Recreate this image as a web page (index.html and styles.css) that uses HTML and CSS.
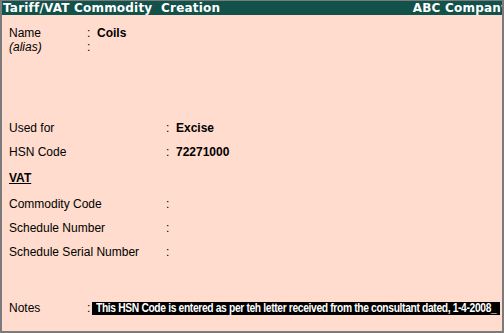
FILE: index.html
```html
<!DOCTYPE html>
<html lang="en">
<head>
    <meta charset="UTF-8">
    <title>Tariff/VAT Commodity Creation</title>
    <link rel="stylesheet" href="styles.css">
</head>
<body>

    <div class="screen">
        <div class="title-bar">
            <span class="title">Tariff/VAT Commodity&nbsp; Creation</span>
            <span class="company">ABC Company</span>
        </div>

        <div class="form">
            <!-- name block -->
            <div class="short-row">
                <span class="label narrow">Name</span>
                <span class="colon">:</span>
                <span class="value">Coils</span>
            </div>
            <div class="short-row">
                <span class="label narrow alias">(alias)</span>
                <span class="colon">:</span>
            </div>

            <!-- excise block -->
            <div class="section">
                <div class="row">
                    <span class="label">Used for</span>
                    <span class="colon">:</span>
                    <span class="value">Excise</span>
                </div>
                <div class="row">
                    <span class="label">HSN Code</span>
                    <span class="colon">:</span>
                    <span class="value">72271000</span>
                </div>
                <div class="row heading">VAT</div>
                <div class="row vat-first">
                    <span class="label">Commodity Code</span>
                    <span class="colon">:</span>
                </div>
                <div class="row">
                    <span class="label">Schedule Number</span>
                    <span class="colon">:</span>
                </div>
                <div class="row">
                    <span class="label">Schedule Serial Number</span>
                    <span class="colon">:</span>
                </div>
            </div>

            <div class="row notes">
                <span class="label narrow">Notes</span>
                <span class="colon">:</span>
                <div class="notes-box">
                    <span class="notes-text">This HSN Code is entered as per teh letter received from the consultant dated, 1-4-2008_</span>
                </div>
            </div>
        </div>
    </div>

</body>
</html>
```

FILE: styles.css
```css
body {
    margin: 0;
    background-color: #ffdccd;
}
.screen {
    box-sizing: border-box;
    width: 504px;
    height: 333px;
    border-top: 1px solid #7b7b7b;
    border-left: 2px solid #7b7b7b;
    border-right: 2px solid #7b7b7b;
    border-bottom: 2px solid #7b7b7b;
    background-color: #ffdccd;
    overflow: hidden;
    font-family: "Liberation Sans", Arial, sans-serif;
    font-size: 12px;
    color: #000;
}
.title-bar {
    display: flex;
    justify-content: space-between;
    height: 14px;
    padding-left: 1px;
    background-color: #12524a;
    color: #fff;
    font-family: "DejaVu Sans", Verdana, sans-serif;
    font-weight: bold;
    font-size: 12px;
    letter-spacing: 0.2px;
    line-height: 15px;
    white-space: nowrap;
    overflow: hidden;
}
.company {
    margin-right: -7px; /* last letter is cut by the window edge */
}
.form {
    padding: 11px 0 0 7px;
}
.short-row {
    display: flex;
    height: 14px;
    line-height: 14px;
}
.row {
    display: flex;
    height: 24px;
    line-height: 24px;
}
.label {
    width: 157px;
    flex-shrink: 0;
}
.label.narrow {
    width: 78px;
}
.alias {
    font-style: italic;
}
.colon {
    width: 10px;
    flex-shrink: 0;
}
.value {
    font-weight: bold;
}
.section {
    margin-top: 62px;
}
.heading {
    box-sizing: border-box;
    padding-top: 2px;
    font-weight: bold;
    text-decoration: underline;
}
.vat-first {
    margin-top: 4px;
}
.notes {
    margin-top: 32px;
    align-items: center;
}
.notes-box {
    box-sizing: border-box;
    display: flex;
    align-items: center;
    width: 408px;
    height: 13px;
    margin-left: -5px;
    padding-left: 4px;
    background-color: #000;
    line-height: 13px;
    overflow: hidden;
}
.notes-text {
    color: #fff;
    font-weight: bold;
    font-size: 12px;
    letter-spacing: -0.4px;
    white-space: nowrap;
    transform: scaleX(0.855);
    transform-origin: left center;
}
```
